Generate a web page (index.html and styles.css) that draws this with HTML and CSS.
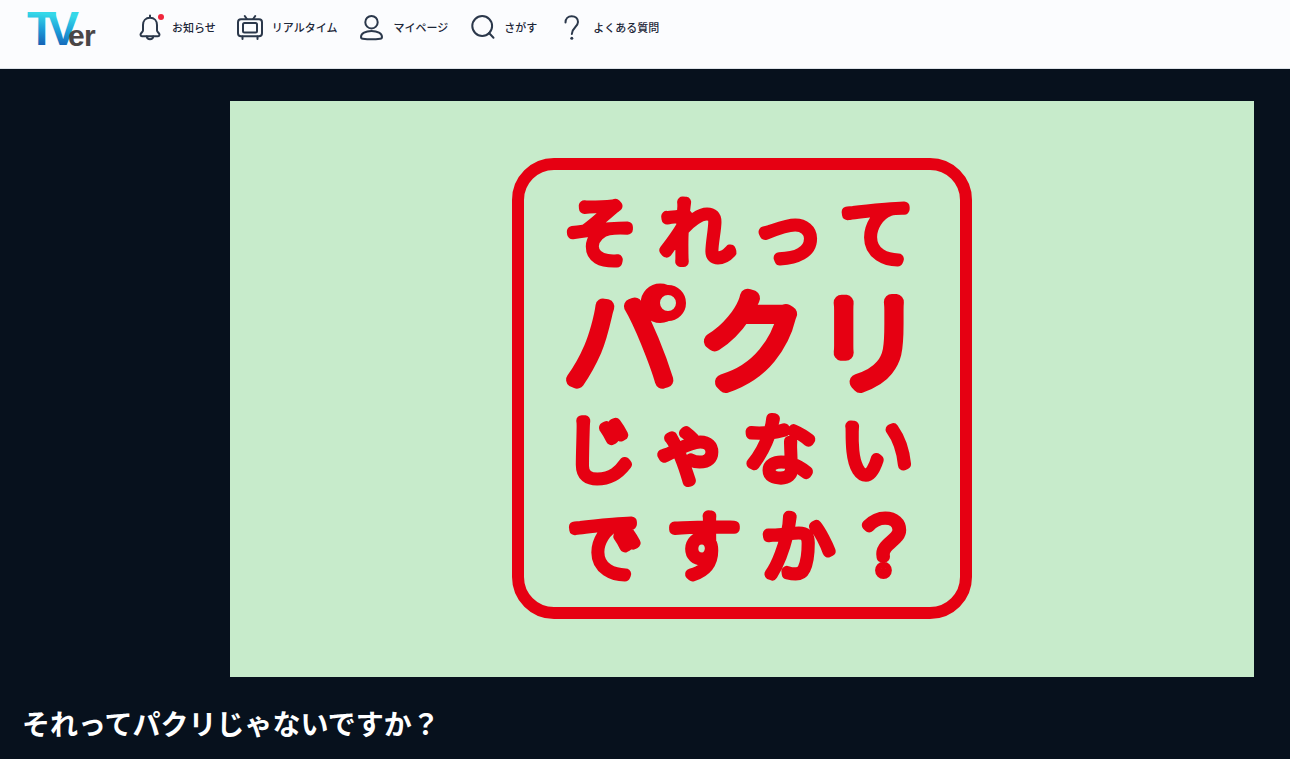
FILE: index.html
```
<!DOCTYPE html>
<html lang="ja">
<head>
    <meta charset="UTF-8">
    <meta name="viewport" content="width=device-width, initial-scale=1.0">
    <title>それってパクリじゃないですか？ | TVer</title>
    <link rel="stylesheet" href="styles.css">
</head>
<body>

    <header class="header">
        <a href="#" class="logo" aria-label="TVer">
            <svg width="72" height="44" viewBox="0 0 72 44">
                <defs>
                    <linearGradient id="logo-blue" x1="0.1" y1="0" x2="0" y2="1">
                        <stop offset="0.2" stop-color="#35d8e8"/>
                        <stop offset="0.5" stop-color="#1c9bd8"/>
                        <stop offset="0.8" stop-color="#1560b4"/>
                    </linearGradient>
                </defs>
                <text class="logo-tv" x="-1 19" y="37">TV</text>
                <text class="logo-er" x="40 56" y="38">er</text>
            </svg>
        </a>
        <nav class="nav">
            <a href="#" class="nav-item">
                <svg class="icon" viewBox="0 0 28 28">
                    <path d="M14 2.500v2.300M14 4.800c-4.400 0-7 3.200-7 7.200v5.200c0 1.800-2.500 2.800-2.500 4.600 0 .9.5 1.400 1.400 1.400h16.200c.9 0 1.400-.5 1.400-1.400 0-1.800-2.500-2.800-2.500-4.600V12c0-4-2.600-7.200-7-7.200z"/>
                    <path d="M10.800 23.400c.2 1.900 1.300 2.900 3.200 2.900s3-1 3.200-2.900"/>
                    <circle class="dot" cx="25" cy="4" r="3"/>
                </svg>
                お知らせ
            </a>
            <a href="#" class="nav-item">
                <svg class="icon" viewBox="0 0 28 28">
                    <rect x="2" y="6.200" width="24" height="17" rx="3"/>
                    <rect x="7" y="10" width="14" height="9.500" rx="1.500"/>
                    <path d="M8.800 3l2 3M19.200 3l-2 3M6.500 23.500V26M21.500 23.500V26"/>
                </svg>
                リアルタイム
            </a>
            <a href="#" class="nav-item">
                <svg class="icon" viewBox="0 0 28 28">
                    <circle cx="14.500" cy="9.200" r="6.200"/>
                    <path d="M14.500 18c-6 0-10.500 2.400-10.500 6 0 1.200.6 1.600 1.800 1.700 5 .6 12.400.6 17.400 0 1.200-.1 1.800-.5 1.800-1.700 0-3.600-4.500-6-10.500-6z"/>
                </svg>
                マイページ
            </a>
            <a href="#" class="nav-item">
                <svg class="icon" viewBox="0 0 28 28">
                    <circle cx="14.200" cy="13" r="9.900"/>
                    <path d="M21 20l4.500 4.700"/>
                </svg>
                さがす
            </a>
            <a href="#" class="nav-item">
                <svg class="icon" viewBox="0 0 28 28">
                    <path d="M8.500 9.500c0-3.900 2.500-6.300 6.200-6.300 3.800 0 6.300 2.300 6.300 5.800 0 5-6.200 5.600-6.200 12"/>
                    <circle class="point" cx="14.800" cy="25.300" r="1.500"/>
                </svg>
                よくある質問
            </a>
        </nav>
    </header>

    <main class="main">
        <!-- Key visual -->
        <div class="visual">
            <svg class="visual-art" viewBox="0 0 1024 576" role="img" aria-label="それってパクリじゃないですか？">
                <rect class="frame" x="288" y="63" width="448" height="449" rx="36"/>
                <text class="row" x="334 430 521 610" y="158">それって</text>
                <text class="row row-big" x="333 468 585" y="281"><tspan class="pa">パ</tspan>クリ</text>
                <circle class="ring" cx="438" cy="202" r="13"/>
                <text class="row" x="333 423 513 610" y="375">じゃない</text>
                <text class="row" x="338 437 531 618" y="472">ですか？</text>
            </svg>
        </div>
        <h1 class="title">それってパクリじゃないですか？</h1>
    </main>

</body>
</html>
```
FILE: styles.css
```
/* General styles */
body {
    margin: 0;
    background-color: #07111d;
    color: #fff;
    font-family: "Noto Sans CJK JP", sans-serif;
}

/* Header */
.header {
    display: flex;
    align-items: flex-start;
    gap: 36px;
    height: 60px;
    padding: 8px 28px 0;
    background-color: #fbfcfe;
    border-bottom: 1px solid #dde2e8;
}

.logo {
    display: block;
}

.logo svg {
    display: block;
    overflow: visible;
}

.logo-tv {
    font-family: "Liberation Sans", sans-serif;
    font-size: 48px;
    font-weight: bold;
    fill: url(#logo-blue);
}

.logo-er {
    font-family: "Liberation Sans", sans-serif;
    font-size: 30px;
    font-weight: bold;
    fill: #4a4646;
}

.nav {
    display: flex;
    gap: 20px;
    padding-top: 5px;
}

.nav-item {
    display: flex;
    align-items: center;
    gap: 8px;
    color: #1c2638;
    font-size: 11px;
    font-weight: 500;
    line-height: 28px;
    text-decoration: none;
    white-space: nowrap;
}

.icon {
    width: 28px;
    height: 28px;
    fill: none;
    stroke: #2b384b;
    stroke-width: 2;
    stroke-linecap: round;
    stroke-linejoin: round;
}

.icon .dot {
    fill: #f0263c;
    stroke: none;
}

.icon .point {
    fill: #2b384b;
    stroke: none;
}

/* Main */
.main {
    padding-top: 32px;
}

.visual {
    margin: 0 36px 0 230px;
    background-color: #c7ebcb;
}

.visual-art {
    display: block;
    width: 100%;
}

.frame {
    fill: none;
    stroke: #e60012;
    stroke-width: 12;
}

/* thin glyphs with a heavy round stroke give the soft, rounded lettering */
.row {
    font-size: 73px;
    font-weight: 100;
    fill: #e60012;
    stroke: #e60012;
    stroke-width: 11;
    stroke-linejoin: round;
}

.row-big {
    font-size: 108px;
    stroke-width: 16;
}

.pa {
    font-size: 116px;
    stroke-width: 15;
}

.ring {
    fill: #c7ebcb;
    stroke: #e60012;
    stroke-width: 10;
}

.title {
    margin: 0;
    padding: 25px 22px 15px;
    font-size: 28px;
    line-height: 42px;
}
```
